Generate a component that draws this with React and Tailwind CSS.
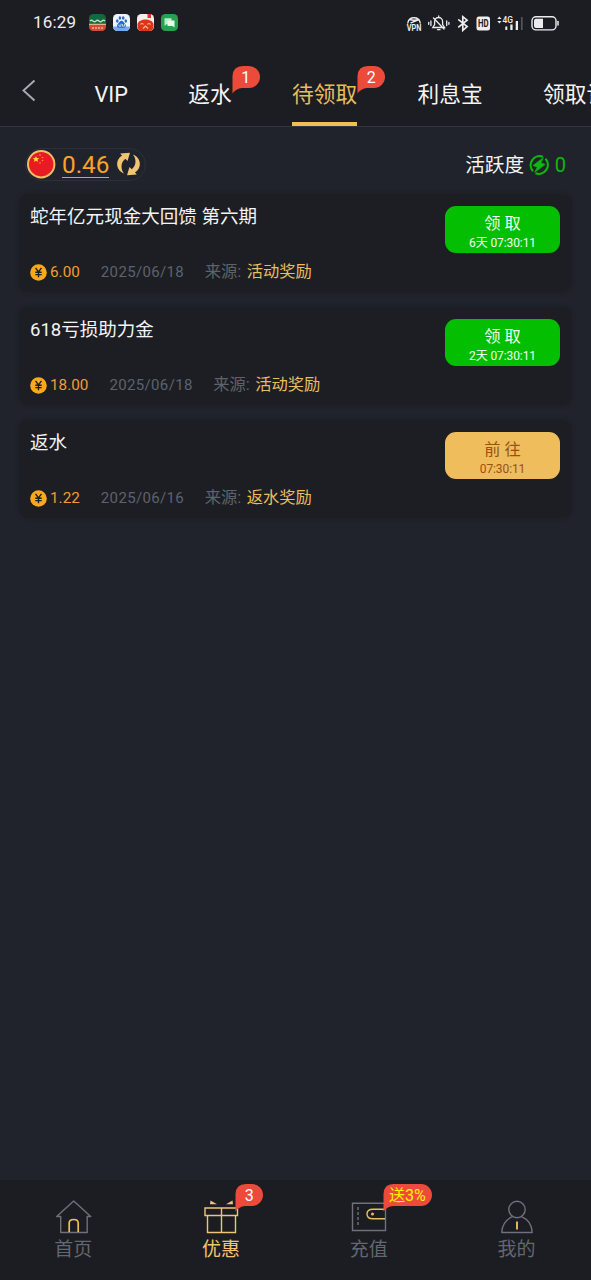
import React from "react";

const rewards = [
  { title: "蛇年亿元现金大回馈 第六期", amount: "6.00", date: "2025/06/18", source: "活动奖励", action: "领 取", time: "6天 07:30:11", ready: true },
  { title: "618亏损助力金", amount: "18.00", date: "2025/06/18", source: "活动奖励", action: "领 取", time: "2天 07:30:11", ready: true },
  { title: "返水", amount: "1.22", date: "2025/06/16", source: "返水奖励", action: "前 往", time: "07:30:11", ready: false },
];

const tabs = [
  { label: "VIP" },
  { label: "返水", badge: "1" },
  { label: "待领取", badge: "2", active: true },
  { label: "利息宝" },
  { label: "领取记录" },
];

function Bubble({ children, wide }) {
  return (
    <span className={`relative flex h-[22px] items-center justify-center leading-none ${wide ? "w-[49px] text-[16px] text-[#fff200]" : "w-7 text-[16px] text-white"}`}>
      <svg className="absolute left-0 top-0" width={wide ? 49 : 28} height="28" viewBox={wide ? "0 0 49 28" : "0 0 28 28"}>
        <path
          fill="#ec4b3c"
          d={wide
            ? "M10 0H38a11 11 0 0 1 0 22H10Q4 22.5 0.5 27.5V10Q1 0 10 0Z"
            : "M11 0H17a11 11 0 0 1 0 22H10Q4 22.5 0.5 27.5V10Q1 0 11 0Z"}
        />
      </svg>
      <span className="relative pt-0.5">{children}</span>
    </span>
  );
}

function AppIcons() {
  return (
    <div className="flex gap-[7px]">
      <svg width="17" height="17" viewBox="0 0 17 17">
        <rect width="17" height="17" rx="4.5" fill="#14683f" />
        <path d="M0 10H17V12.5A4.5 4.5 0 0 1 12.500 17H4.500A4.500 4.500 0 0 1 0 12.500Z" fill="#d44a37" />
        <path d="M1 7q1.500-1.500 3 0t3 0t3 0t3 0t3 0" fill="none" stroke="#b5e4c4" strokeWidth="1.300" />
        <path d="M0 10.300H17" stroke="#e9c9a4" strokeWidth="1" />
        <path d="M3 14h11" stroke="#f0b49c" strokeWidth="1.500" strokeDasharray="2 1" />
      </svg>
      <svg width="17" height="17" viewBox="0 0 17 17">
        <rect width="17" height="17" rx="4.500" fill="#eef4fd" />
        <path d="M0 12.500H17A4.500 4.500 0 0 1 12.500 17H4.500A4.500 4.500 0 0 1 0 12.500Z" fill="#76aaf0" />
        <g fill="#2c67c9">
          <ellipse cx="4.300" cy="7" rx="1.300" ry="1.700" />
          <ellipse cx="6.900" cy="4" rx="1.300" ry="1.800" />
          <ellipse cx="10.200" cy="4" rx="1.300" ry="1.800" />
          <ellipse cx="12.800" cy="7" rx="1.300" ry="1.700" />
          <path d="M8.500 6.700c1.800 0 2 1.700 3.200 2.700 2 1.700 1.200 4.300-.8 4.300H6c-2 0-2.800-2.600-.8-4.300 1.300-1 1.500-2.700 3.300-2.700Z" />
        </g>
        <path d="M6 10.500v1.700h2v-2.500M9.500 10v2.200h2V10" stroke="#dce9fc" strokeWidth=".8" fill="none" />
      </svg>
      <svg width="17" height="17" viewBox="0 0 17 17">
        <rect width="17" height="17" rx="4.500" fill="#f7eeeb" />
        <path d="M.5 10C2 4 15 4 16.500 10V13Q16 17 12.500 17H4.500Q1 17 .5 13Z" fill="#df3419" />
        <path d="M10.500 0h3.500v4h-3.500z" fill="#e5351f" />
        <path d="M3.500 10.500q1.500-2 3 0M10.500 10.500q1.500-2 3 0M6 14.500l2.500-2.500 2.500 2.500" stroke="#ffba82" strokeWidth="1.100" fill="none" />
      </svg>
      <svg width="17" height="17" viewBox="0 0 17 17">
        <rect width="17" height="17" rx="4.500" fill="#25a151" />
        <path d="M3.500 4.200h7v6h-5l-2 1.800z" fill="#bdebc8" />
        <path d="M6.500 6.500h7v7l-2-1.500h-5z" fill="#e7f9e9" />
      </svg>
    </div>
  );
}

function SystemIcons() {
  return (
    <svg width="154" height="20" viewBox="406 12 154 20" fill="none" stroke="#ededf0" strokeLinecap="round">
      <path d="M407.800 22a6.300 6.300 0 0 1 12.400 0M409.500 18.500q4.500 1.500 9 0M411 21.800l8-3.300" strokeWidth="1.400" />
      <text x="406.800" y="30" fontFamily="Roboto" fontSize="8.500" fontWeight="700" fill="#ededf0" stroke="none" textLength="14.500" lengthAdjust="spacingAndGlyphs">VPN</text>
      <path d="M432.800 26.500h11.800l-2-3v-3a4 4 0 0 0-8 0v3zM437.500 28.700h2.500M438.700 16v-1M433.500 17l10.500 11M430.900 20v4.500M428.700 21.300v2M446.700 20v4.500M448.900 21.300v2" strokeWidth="1.300" />
      <path d="M458.800 18.900l8.300 6.700-4.300 3.700V15.700l4.300 3.500-8.300 6.700" strokeWidth="1.700" />
      <rect x="476.500" y="15.500" width="13.500" height="14" rx="2.500" fill="#ededf0" stroke="none" />
      <text x="478" y="26" fontFamily="Roboto" fontSize="10" fontWeight="700" fill="#1c1d22" stroke="none" textLength="10.600" lengthAdjust="spacingAndGlyphs">HD</text>
      <path d="M497.300 18l2.100-2.500 2.100 2.500zM497.300 20l2.100 2.500 2.100-2.500z" fill="#ededf0" stroke="none" />
      <text x="502.500" y="22" fontFamily="Roboto" fontSize="9" fontWeight="500" fill="#ededf0" stroke="none" textLength="10.500" lengthAdjust="spacingAndGlyphs">4G</text>
      <path d="M505.300 25.500h2v3.500h-2zM510.300 23.500h2.300v5.500h-2.300zM515.700 20h2.300v9h-2.300z" fill="#ededf0" stroke="none" />
      <path d="M521.800 16v13" stroke="#55565a" strokeWidth="1.700" strokeLinecap="butt" />
      <rect x="532" y="15.700" width="24" height="13.200" rx="4" strokeWidth="1.400" />
      <path d="M536 17.700h7v9.300h-7a2 2 0 0 1-2-2v-5.300a2 2 0 0 1 2-2z" fill="#ededf0" stroke="none" />
      <path d="M558 20.500v3.500" strokeWidth="1.500" />
    </svg>
  );
}

function Flag() {
  return (
    <svg width="29" height="29" viewBox="0 0 29 29">
      <circle cx="14.200" cy="14.200" r="13.200" fill="#e81b22" stroke="#f2bd68" strokeWidth="2" />
      <path d="M9 6l.9 2.100 2.300.2-1.700 1.500.5 2.200L9 10.800 7 12l.5-2.200-1.700-1.500 2.300-.2z" fill="#ffd92f" />
      <g fill="#f5a126"><circle cx="13" cy="5" r=".8" /><circle cx="15.500" cy="7.500" r=".8" /><circle cx="15.500" cy="10.500" r=".8" /><circle cx="13" cy="13" r=".8" /></g>
    </svg>
  );
}

function Refresh() {
  return (
    <svg width="23" height="24" viewBox="0 0 23 24" fill="#efc573">
      <path d="M7 21.500C-1.500 18 -2 8 5 3.600L3.200 1.500L13 .8L10.500 9L8.300 6.800C3.500 10.500 3.500 17 7 21.500Z" />
      <path transform="rotate(180 11.500 12)" d="M7 21.500C-1.500 18 -2 8 5 3.600L3.200 1.500L13 .8L10.500 9L8.300 6.800C3.500 10.500 3.500 17 7 21.500Z" />
    </svg>
  );
}

function Energy() {
  return (
    <svg width="20" height="20" viewBox="0 0 20 20" fill="none" stroke="#0eb80e" strokeWidth="2.200">
      <path d="M14 1.800A9 9 0 0 0 4 16.200M6.500 18.200A9 9 0 0 0 16.500 3.800" />
      <path d="M14.500 2.500L4 10.500L8.300 12.300L5.500 17.500L16.200 9.500L12 7.800Z" fill="#0eb80e" stroke="#0eb80e" strokeWidth=".6" />
    </svg>
  );
}

function Coin() {
  return (
    <svg width="17" height="17" viewBox="0 0 17 17">
      <circle cx="8.500" cy="8.500" r="8.300" fill="#fba91c" />
      <path d="M5.500 3.800l3 4 3-4M8.500 7.800v5.400M5.300 8.200h6.400M5.300 10.600h6.400" stroke="#1d1e23" strokeWidth="1.400" fill="none" />
    </svg>
  );
}

function Card({ item }) {
  return (
    <article className="flex h-[98px] justify-between rounded-[10px] bg-[#1d1e23] pl-[11px] pr-3 pt-3 shadow-[0_0_4px_#1d1e23]">
      <div className="flex flex-col pt-px">
        <h2 className="h-5 whitespace-nowrap text-[18.55px] leading-5 text-[#f4f4f5]">{item.title}</h2>
        <div className="mt-[34px] flex h-[22px] items-center whitespace-nowrap leading-[22px]">
          <Coin />
          <span className="ml-[3px] text-[15.3px] text-[#f09c38]">{item.amount}</span>
          <span className="ml-[21px] text-[15px] tracking-[0.35px] text-[#5c626e]">{item.date}</span>
          <span className="ml-[20.5px] text-[16.300px] text-[#5c626e]">来源:</span>
          <span className="ml-[5.500px] text-[16.300px] text-[#e8bf5e]">{item.source}</span>
        </div>
      </div>
      <button className={`flex h-[47px] w-[115px] flex-col items-center rounded-[11px] pt-2 ${item.ready ? "bg-[#04be02] text-[#f1fff0]" : "bg-[#efbd5c] text-[#995116]"}`}>
        <span className="h-[19px] text-[16.3px] leading-5">{item.action}</span>
        <span className="h-5 text-[12px] leading-5 tracking-[-0.1px]">{item.time}</span>
      </button>
    </article>
  );
}

function NavIcon({ type }) {
  const common = { width: 40, height: 40, viewBox: "0 0 40 40", fill: "none", stroke: "#6c717b", strokeWidth: 1.4 };
  if (type === "home") return (
    <svg {...common} viewBox="-0.700 0 40 40">
      <path d="M7 20.500H3L20 5L37 20.500H33.500V36.500H7V20.500Z" strokeLinejoin="round" />
      <path d="M15.500 36V27q0-3.500 4.500-3.500T24.500 27v9" stroke="#efbd5c" strokeWidth="1.700" />
    </svg>
  );
  if (type === "gift") return (
    <svg {...common} stroke="#efc573">
      <path d="M4 12H36.500V19.500H4ZM6.500 19.500V36.500H34.500V19.500M20.500 12V36.500" />
      <path d="M9.500 4.500L16 8.300H9ZM31.500 4.500L25 8.300H32Z" fill="#efc573" stroke="none" />
    </svg>
  );
  if (type === "wallet") return (
    <svg {...common} viewBox="-1 0 40 40">
      <path d="M3.500 7.300H36.500V34.500H3.500Z" />
      <path d="M9 11V30" strokeDasharray="3 2" />
      <path d="M36 13.200H24Q18 13.200 18 18T24 22.800H36" stroke="#efbd5c" />
      <circle cx="23.500" cy="18" r="1.500" fill="#efbd5c" stroke="none" />
    </svg>
  );
  return (
    <svg {...common} viewBox="-1 0 40 40">
      <circle cx="20" cy="13.500" r="8.200" />
      <path d="M15.500 20.700C9 23.500 5 29.500 4.800 36.500H35.200C35 29.500 31 23.500 24.500 20.700" strokeLinejoin="round" />
      <path d="M20 25.500v8" stroke="#efbd5c" strokeWidth="1.900" />
    </svg>
  );
}

const nav = [
  { label: "首页", type: "home" },
  { label: "优惠", type: "gift", badge: "3", active: true },
  { label: "充值", type: "wallet", badge: "送3%", wide: true },
  { label: "我的", type: "user" },
];

export default function App() {
  return (
    <div className="flex h-[1280px] w-[591px] flex-col overflow-hidden bg-[#20232b] font-['Roboto','Noto_Sans_CJK_SC',sans-serif]">
      <header className="h-[127px] shrink-0 border-b border-[#33353d] bg-[#1c1d22]">
        <div className="flex h-[45px] items-center pl-[33px] pr-[31px]">
          <span className="w-14 pb-px text-[17px] leading-5 tracking-[0.2px] text-[#ededf0]">16:29</span>
          <AppIcons />
          <div className="ml-auto"><SystemIcons /></div>
        </div>
        <nav className="flex h-[81px] items-start overflow-hidden">
          <svg className="ml-[21px] mr-[58.500px] mt-[34px] shrink-0" width="15" height="23" viewBox="0 0 15 23" fill="none" stroke="#a7abb6" strokeWidth="1.900">
            <path d="M13.500 1.500L2.500 11.500L13.500 21.500" />
          </svg>
          <div className="flex gap-[60.400px]">
            {tabs.map((tab) => (
              <div key={tab.label} className={`relative h-[81px] shrink-0 pt-[35px] text-[21.7px] leading-[30px] whitespace-nowrap ${tab.active ? "border-b-[4px] border-[#efbd5c] text-[#e8bc5b]" : "text-[#f4f4f5]"}`}>
                {tab.label}
                {tab.badge && <span className="absolute left-full top-[21px]"><Bubble>{tab.badge}</Bubble></span>}
              </div>
            ))}
          </div>
        </nav>
      </header>

      <main className="flex-1 px-[19px] pt-[21px]">
        <div className="flex h-[33px] items-center justify-between pl-[6px] pr-[6px]">
          <div className="flex h-[33px] w-[121px] items-center rounded-full border border-[#2c3038] pl-px">
            <Flag />
            <span className="ml-[6px] h-[26px] border-b border-[#f09c38] text-[24.300px] leading-[26px] text-[#fba326]">0.46</span>
            <span className="ml-[8px] pb-px"><Refresh /></span>
          </div>
          <div className="flex items-center text-[19.700px] leading-7 text-[#f4f4f5]">
            <span className="pt-0.5">活跃度</span>
            <span className="ml-[5px] mr-[5.500px]"><Energy /></span>
            <span className="text-[20px] text-[#0eb80e]">0</span>
          </div>
        </div>
        <section className="mt-[13px] flex flex-col gap-[15.200px]">
          {rewards.map((item) => <Card key={item.title} item={item} />)}
        </section>
      </main>

      <footer className="grid h-[100px] shrink-0 grid-cols-4 bg-[#1c1d22]">
        {nav.map((item) => (
          <div key={item.label} className="flex flex-col items-center pt-4">
            <div className="relative right-px h-10 w-10">
              <NavIcon type={item.type} />
              {item.badge && <span className="absolute -top-3 left-[34.500px]"><Bubble wide={item.wide}>{item.badge}</Bubble></span>}
            </div>
            <span className={`pr-px pt-px text-[19px] leading-[26px] ${item.active ? "text-[#efc573]" : "text-[#626771]"}`}>{item.label}</span>
          </div>
        ))}
      </footer>
    </div>
  );
}
